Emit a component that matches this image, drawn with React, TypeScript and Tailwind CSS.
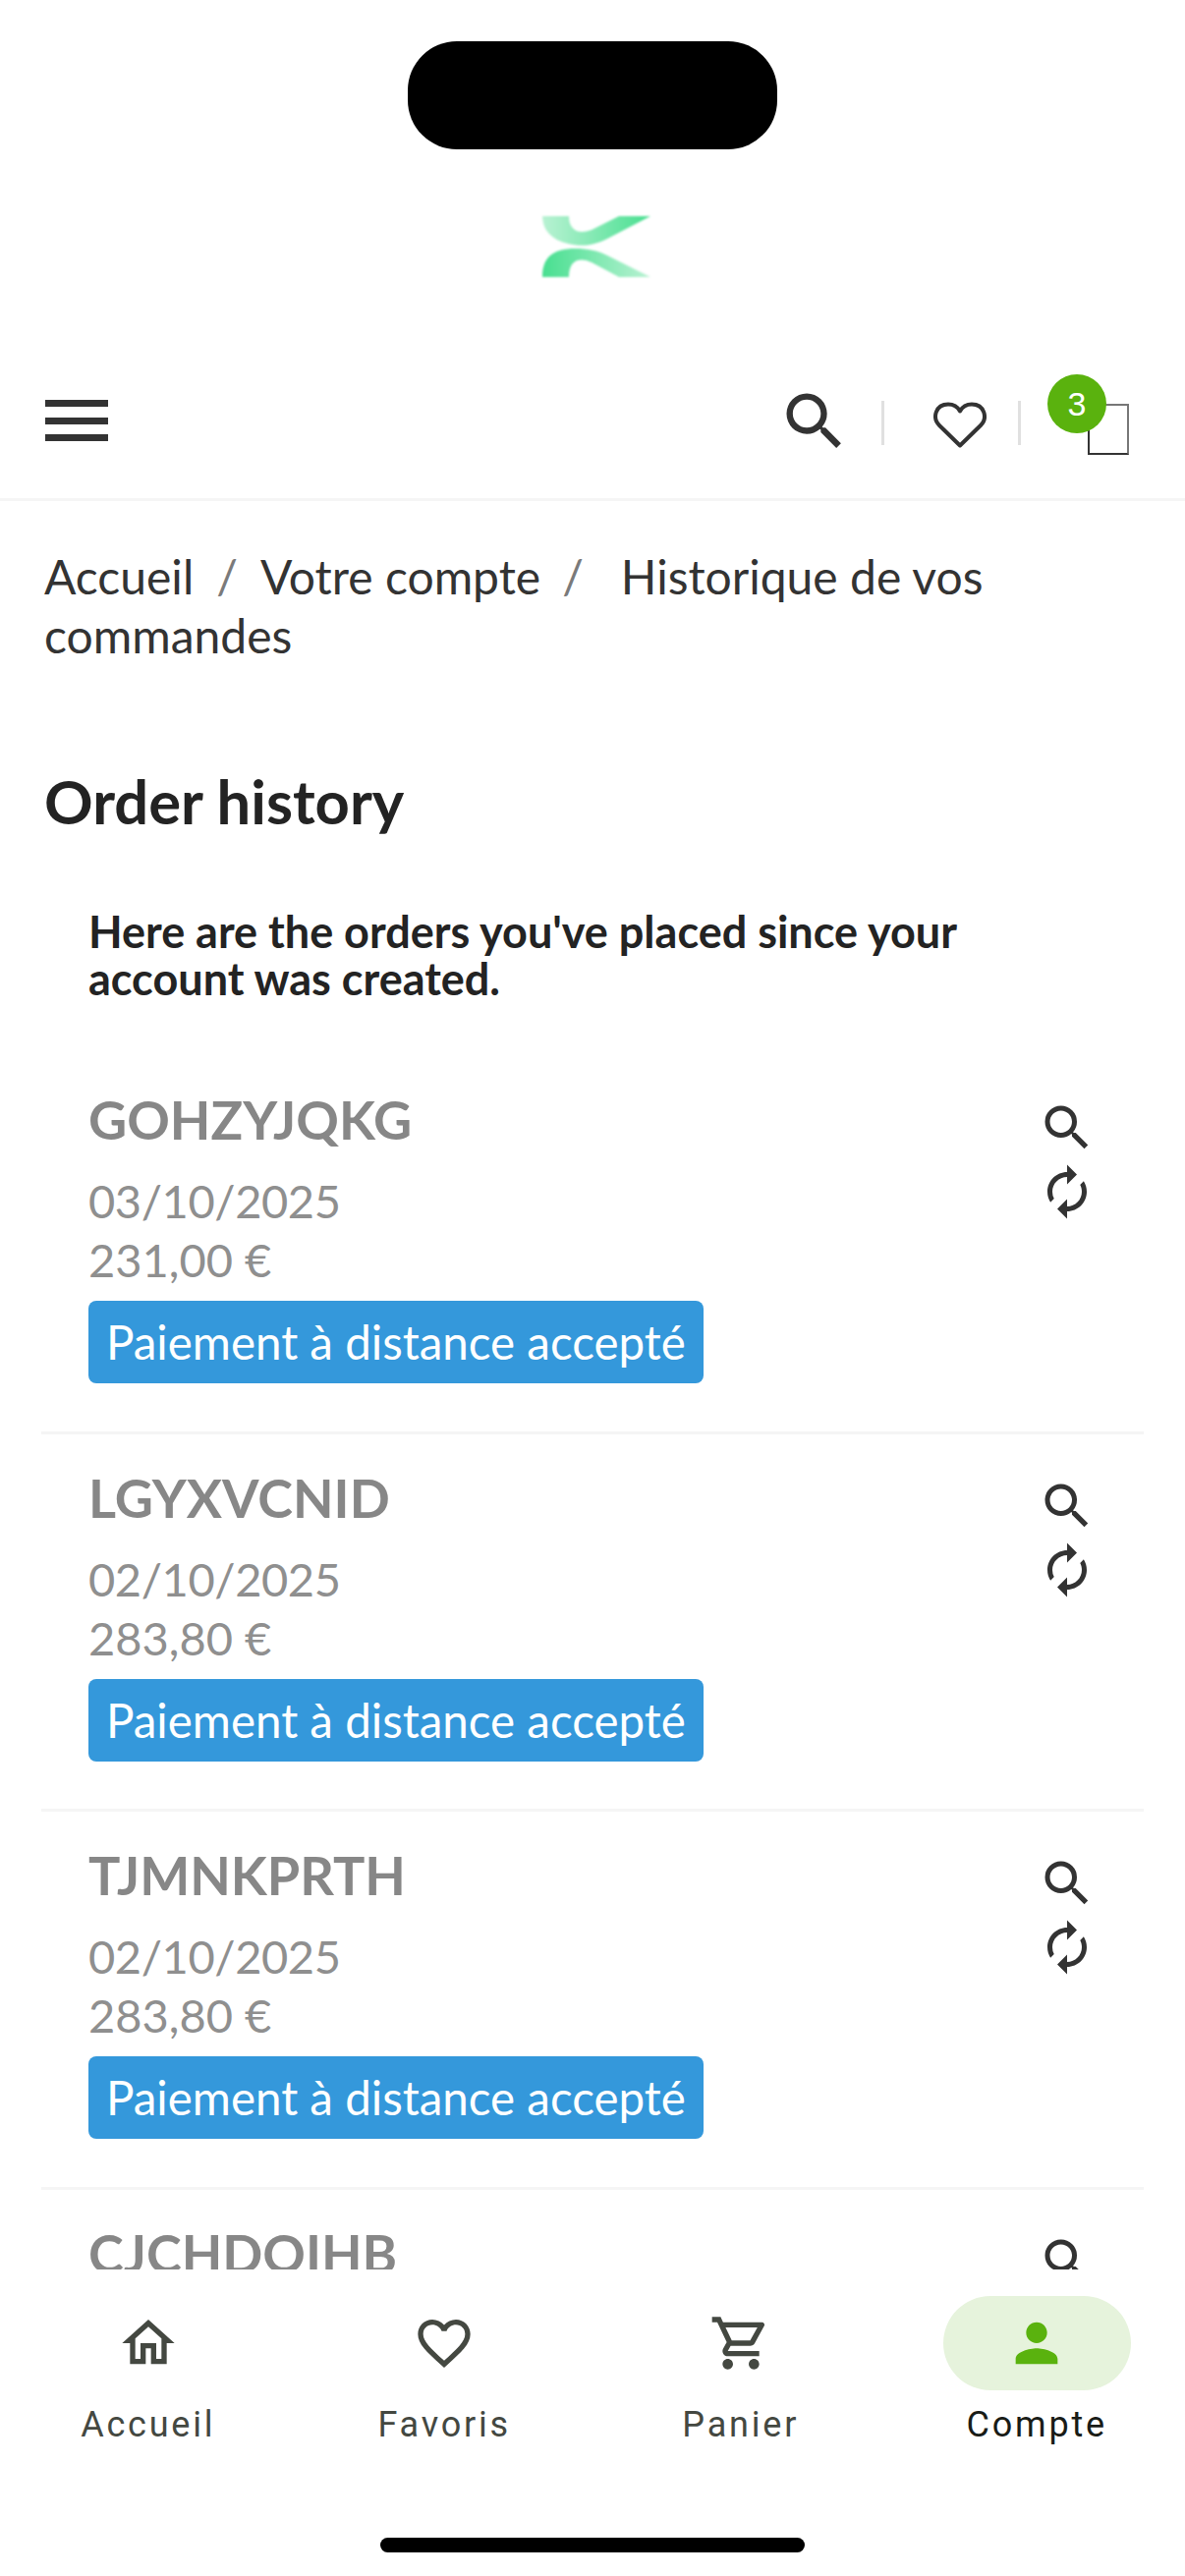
import { MdFavoriteBorder, MdOutlineHome, MdOutlineShoppingCart, MdPerson, MdSearch, MdAutorenew } from "react-icons/md"

const orders = [
  { ref: "GOHZYJQKG", date: "03/10/2025", total: "231,00 €" },
  { ref: "LGYXVCNID", date: "02/10/2025", total: "283,80 €" },
  { ref: "TJMNKPRTH", date: "02/10/2025", total: "283,80 €" },
  { ref: "CJCHDOIHB", date: "02/10/2025", total: "283,80 €" },
]

const navItems = [
  { label: "Accueil", Icon: MdOutlineHome },
  { label: "Favoris", Icon: MdFavoriteBorder },
  { label: "Panier", Icon: MdOutlineShoppingCart },
]

function Logo() {
  return (
    <svg width="110" height="62" viewBox="0 0 110 62" className="ml-[8px] blur-[1.2px]">
      <defs>
        <linearGradient id="logo-top" x1="0" y1="0" x2="1" y2="0">
          <stop offset="0" stopColor="#b9f2d3" />
          <stop offset="1" stopColor="#48df90" />
        </linearGradient>
        <linearGradient id="logo-bottom" x1="0" y1="0" x2="1" y2="0">
          <stop offset="0" stopColor="#48df90" />
          <stop offset="1" stopColor="#b9f2d3" />
        </linearGradient>
      </defs>
      <path d="M0 0H27C27 14 36 19 50 14L78 0H110L66 23C50 31 38 31 26 28C9 24 0 14 0 0Z" fill="url(#logo-top)" />
      <path d="M0 62C0 44 8 33 34 33C46 33 56 35 66 40L110 62H78L50 47C36 41 27 46 27 62Z" fill="url(#logo-bottom)" />
    </svg>
  )
}

function OrderRow({ order }: { order: (typeof orders)[number] }) {
  return (
    <div className="mx-[42px] flex h-[384.5px] justify-between border-b-[3px] border-[#f5f5f5] px-[48px]">
      <div>
        <h3 className="pt-[33px] text-[54px] leading-[64px] font-bold text-[#878787]">{order.ref}</h3>
        <p className="mt-[20px] text-[47px] leading-[60px] tracking-[-0.4px] text-[#8f8f8f]">{order.date}</p>
        <p className="text-[47px] leading-[60px] text-[#8f8f8f]">{order.total}</p>
        <span className="mt-[12px] inline-block h-[84px] rounded-[8px] bg-[#3498db] px-[18px] text-[47.5px] leading-[84px] text-white">
          Paiement à distance accepté
        </span>
      </div>
      <div className="flex flex-col pt-[43px] text-[#333333]">
        <MdSearch size={60} />
        <MdAutorenew size={60} className="mt-[5px]" />
      </div>
    </div>
  )
}

export default function App() {
  return (
    <div className="relative h-[2622px] w-[1206px] overflow-hidden bg-white font-['Lato','Noto_Sans',sans-serif] text-[#232323]">
      <div className="flex justify-center pt-[42px]">
        <div className="h-[110px] w-[376px] rounded-[50px] bg-black" />
      </div>
      <div className="flex justify-center pt-[68px]">
        <Logo />
      </div>

      <header className="mt-[1px] flex h-[227px] items-start justify-between border-b-[3px] border-[#f5f5f5] pl-[46px]">
        <div className="mt-[124px] flex h-[42px] w-[64px] flex-col justify-between">
          <span className="h-[7px] bg-[#333333]" />
          <span className="h-[7px] bg-[#333333]" />
          <span className="h-[7px] bg-[#333333]" />
        </div>
        <div className="relative mr-[57px] mt-[129px] flex h-[51px] items-start text-[#333333]">
          <MdSearch size={76} className="mr-[30px] mt-[-21px]" />
          <span className="mt-[-4px] h-[45px] w-[3px] bg-[#e0e0e0]" />
          <svg width="54" height="47" viewBox="0 0 54 47" fill="none" stroke="currentColor" strokeWidth="4" strokeLinejoin="round" className="ml-[50px] mr-[32px] mt-[-3px]">
            <path d="M27 44.5L6 24C-1.5 16.5 2 2.5 15 2.5C20 2.5 24.5 5 27 9.5C29.5 5 34 2.5 39 2.5C52 2.5 55.5 16.5 48 24Z" />
          </svg>
          <span className="mt-[-4px] h-[45px] w-[3px] bg-[#e0e0e0]" />
          <span className="ml-[68px] mt-[-1px] h-[52px] w-[42px] border-2 border-b-[#333333] border-l-[#333333] border-r-[#777777] border-t-[#777777]" />
          <span className="absolute right-[23px] top-[-31px] flex h-[60px] w-[60px] items-center justify-center rounded-full bg-[#5ab20e] font-['Liberation_Sans',sans-serif] text-[34px] text-white">
            3
          </span>
        </div>
      </header>

      <nav className="px-[45px] pt-[47px] text-[48px] leading-[60px] text-[#333333]">
        <span>Accueil</span>
        <span className="px-[23px] text-[#7a7a7a]">/</span>
        <span>Votre compte</span>
        <span className="pl-[22px] pr-[38px] text-[#7a7a7a]">/</span>
        <span>Historique de vos commandes</span>
      </nav>

      <h1 className="px-[45px] pt-[102px] text-[61.5px] leading-[72px] font-bold text-[#232323]">Order history</h1>
      <p className="px-[90px] pt-[73px] text-[45px] leading-[48px] font-bold text-[#232323]">
        Here are the orders you've placed since your account was created.
      </p>

      <div className="mt-[55px]">
        {orders.map((order) => (
          <OrderRow key={order.ref} order={order} />
        ))}
      </div>

      <div className="absolute inset-x-0 bottom-0 h-[312px] bg-white">
        <div className="grid grid-cols-4 pt-[27px] font-['Roboto',sans-serif]">
          {navItems.map(({ label, Icon }) => (
            <div key={label} className="flex flex-col items-center text-[#444841]">
              <div className="flex h-[96px] w-[191px] items-center justify-center">
                <Icon size={64} />
              </div>
              <span className="mt-[13px] text-[36px] leading-[44px] tracking-[2.8px]">{label}</span>
            </div>
          ))}
          <div className="flex flex-col items-center text-[#191c17]">
            <div className="flex h-[96px] w-[191px] items-center justify-center rounded-[48px] bg-[#e6f3dc] text-[#5ab20e]">
              <MdPerson size={64} />
            </div>
            <span className="mt-[13px] text-[36px] leading-[44px] tracking-[2.8px]">Compte</span>
          </div>
        </div>
        <div className="absolute bottom-[24px] left-[387px] h-[15px] w-[432px] rounded-full bg-black" />
      </div>
    </div>
  )
}
